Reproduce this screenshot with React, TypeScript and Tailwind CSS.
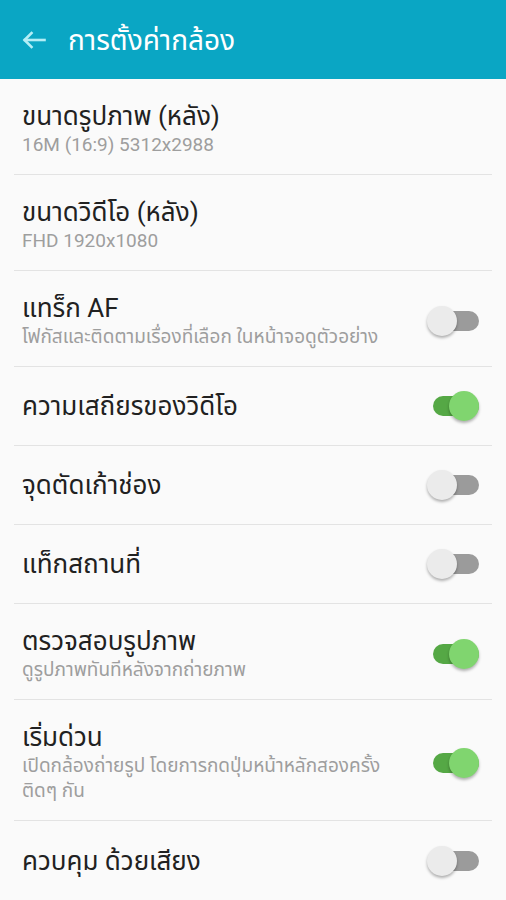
import { useState } from "react";

type Row = {
  title: string;
  subtitle?: string;
  toggle?: boolean;
};

const rows: Row[] = [
  { title: "ขนาดรูปภาพ (หลัง)", subtitle: "16M (16:9) 5312x2988" },
  { title: "ขนาดวิดีโอ (หลัง)", subtitle: "FHD 1920x1080" },
  { title: "แทร็ก AF", subtitle: "โฟกัสและติดตามเรื่องที่เลือก ในหน้าจอดูตัวอย่าง", toggle: false },
  { title: "ความเสถียรของวิดีโอ", toggle: true },
  { title: "จุดตัดเก้าช่อง", toggle: false },
  { title: "แท็กสถานที่", toggle: false },
  { title: "ตรวจสอบรูปภาพ", subtitle: "ดูรูปภาพทันทีหลังจากถ่ายภาพ", toggle: true },
  { title: "เริ่มด่วน", subtitle: "เปิดกล้องถ่ายรูป โดยการกดปุ่มหน้าหลักสองครั้ง ติดๆ กัน", toggle: true },
  { title: "ควบคุม ด้วยเสียง", toggle: false },
];

function Toggle({ on, onClick }: { on: boolean; onClick: () => void }) {
  return (
    <button
      type="button"
      onClick={onClick}
      className="relative h-[30px] w-[52px] shrink-0"
      aria-pressed={on}
    >
      <span
        className={
          on
            ? "absolute right-0 top-[5px] h-[20px] w-[46px] rounded-full bg-[#55a845]"
            : "absolute right-0 top-[5px] h-[20px] w-[46px] rounded-full bg-[#9b9b9b]"
        }
      />
      <span
        className={
          on
            ? "absolute right-0 top-0 size-[30px] rounded-full bg-[#80d56f] shadow-[0_2px_3px_rgba(0,0,0,0.3)]"
            : "absolute left-0 top-0 size-[30px] rounded-full bg-[#ebebeb] shadow-[0_2px_3px_rgba(0,0,0,0.3)]"
        }
      />
    </button>
  );
}

export default function App() {
  const [toggles, setToggles] = useState(rows.map((r) => r.toggle));

  return (
    <main
      className="min-h-[900px] bg-[#fafafa]"
      style={{ fontFamily: 'Roboto, "Noto Sans Thai", "Noto Sans", "DejaVu Sans", sans-serif' }}
    >
      <header className="flex h-[79px] items-center bg-[#0aa6c4] pl-[22px]">
        <svg
          width="24"
          height="18"
          viewBox="0 0 24 18"
          fill="none"
          stroke="#b4eef6"
          strokeWidth="2.6"
          strokeLinecap="square"
          aria-hidden="true"
        >
          <path d="M22.5 9H3" />
          <path d="M9.5 2L2.5 9l7 7" />
        </svg>
        <h1 className="ml-[22px] mt-[2px] text-[28px] leading-none text-white">การตั้งค่ากล้อง</h1>
      </header>

      <ul className="px-[14px]">
        {rows.map((row, i) => (
          <li
            key={row.title}
            className={
              row.subtitle
                ? "flex min-h-[79px] items-center border-b border-[#e3e3e3] pb-[17px] pl-2 pr-[13px] pt-[22px] last:border-b-0"
                : "flex min-h-[79px] items-center border-b border-[#e3e3e3] py-5 pl-2 pr-[13px] last:border-b-0"
            }
          >
            <div className="flex-1 pr-7">
              <div className="text-[26px] leading-[30px] text-[#212121]">{row.title}</div>
              {row.subtitle && (
                <div className="mt-px text-[19px] leading-[25px] text-[#9e9e9e]">{row.subtitle}</div>
              )}
            </div>
            {row.toggle !== undefined && (
              <Toggle
                on={!!toggles[i]}
                onClick={() =>
                  setToggles((t) => t.map((v, j) => (j === i ? !v : v)))
                }
              />
            )}
          </li>
        ))}
      </ul>
    </main>
  );
}
